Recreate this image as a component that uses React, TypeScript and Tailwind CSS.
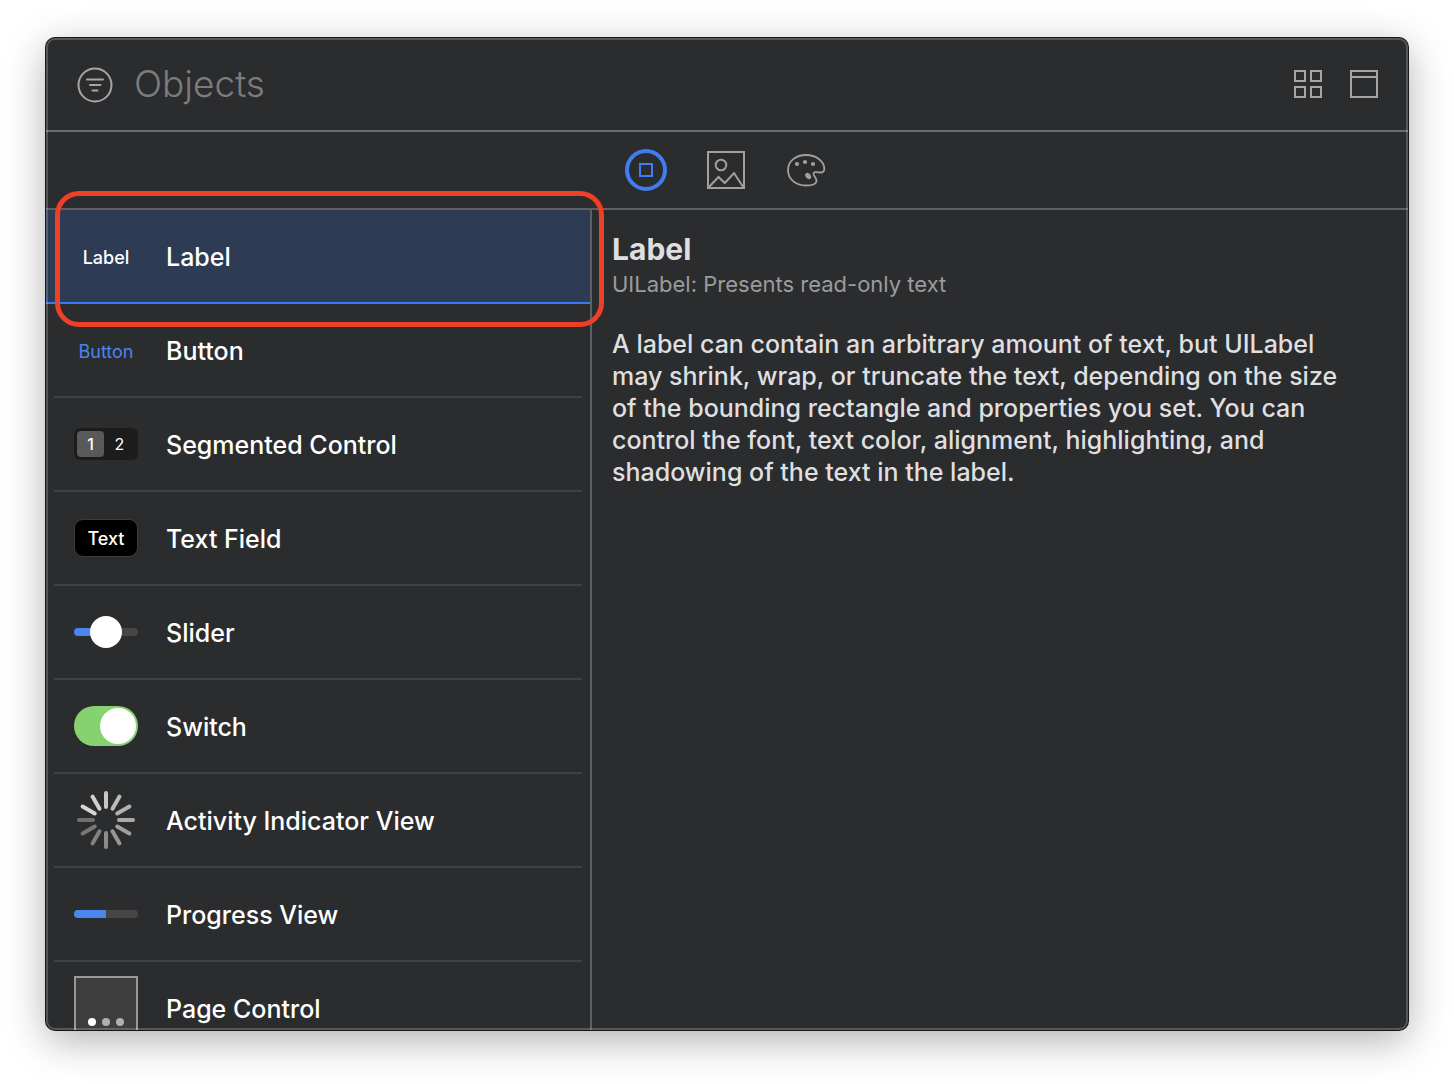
import { ReactNode, useState } from "react";

const spokes = [
  "#c8c8c8", "#bcbcbc", "#b2b2b2", "#aaaaaa", "#a0a0a0", "#969696",
  "#8c8c8c", "#828282", "#787878", "#707070", "#d6d6d6", "#d0d0d0",
];

function SegmentedPreview() {
  return (
    <span className="flex h-8 w-16 items-center rounded-md bg-[#1c1c1d] px-[3px] text-base text-white">
      <span className="flex h-[26px] w-[27px] items-center justify-center rounded bg-[#59595b] font-medium">1</span>
      <span className="flex flex-1 items-center justify-center">2</span>
    </span>
  );
}

function TextFieldPreview() {
  return (
    <span className="flex h-[38px] w-16 items-center justify-center rounded-[9px] border border-[#3c3c3d] bg-black pt-0.5 text-lg font-medium text-white">
      Text
    </span>
  );
}

function SliderPreview() {
  return (
    <span className="flex h-2 w-16 items-center justify-center rounded-full bg-linear-to-r from-[#4a86ee] from-50% to-[#464647] to-50%">
      <span className="size-8 shrink-0 rounded-full bg-white" />
    </span>
  );
}

function SwitchPreview() {
  return (
    <span className="flex h-10 w-16 items-center justify-end rounded-full bg-[#86d170] pr-0.5">
      <span className="size-9 rounded-full bg-white" />
    </span>
  );
}

function ActivityPreview() {
  return (
    <svg className="size-16" viewBox="-32 -32 64 64" strokeWidth="4" strokeLinecap="round" aria-hidden="true">
      {spokes.map((color, i) => (
        <line key={i} y1="-13" y2="-27" stroke={color} transform={`rotate(${i * 30})`} />
      ))}
    </svg>
  );
}

function ProgressPreview() {
  return (
    <span className="flex h-2 w-16 overflow-hidden rounded-full bg-[#464647]">
      <span className="w-1/2 bg-[#4a86ee]" />
    </span>
  );
}

function PagePreview() {
  return (
    <span className="flex size-16 items-end justify-center gap-1.5 border-2 border-[#98989a] bg-[#3d3d3e] pb-3">
      <span className="size-2 rounded-full bg-white" />
      <span className="size-2 rounded-full bg-[#b0b0b0]" />
      <span className="size-2 rounded-full bg-[#b0b0b0]" />
    </span>
  );
}

const objects: { name: string; preview: ReactNode }[] = [
  { name: "Label", preview: <span className="pt-1 text-lg font-medium text-white">Label</span> },
  { name: "Button", preview: <span className="pt-1 text-lg text-[#4b84ee]">Button</span> },
  { name: "Segmented Control", preview: <SegmentedPreview /> },
  { name: "Text Field", preview: <TextFieldPreview /> },
  { name: "Slider", preview: <SliderPreview /> },
  { name: "Switch", preview: <SwitchPreview /> },
  { name: "Activity Indicator View", preview: <ActivityPreview /> },
  { name: "Progress View", preview: <ProgressPreview /> },
  { name: "Page Control", preview: <PagePreview /> },
];

function Header() {
  return (
    <header className="flex h-[94px] shrink-0 items-center border-b-2 border-[#6b6c6d] pr-7 pl-[30px] text-[#a6a6a7]">
      <button type="button" aria-label="Filter" className="shrink-0">
        <svg className="size-[38px]" viewBox="0 0 38 38" fill="none" stroke="currentColor" strokeWidth="2" strokeLinecap="round">
          <circle cx="19" cy="20" r="16.5" />
          <path d="M11 14.500h16M14 20h10.500M16.500 25.500h5" />
        </svg>
      </button>
      <input
        type="text"
        aria-label="Search objects"
        placeholder="Objects"
        className="ml-5 min-w-0 flex-1 bg-transparent text-[37px] leading-[48px] font-[350] text-white outline-none placeholder:text-[#7b7c7d] placeholder:opacity-100"
      />
      <div className="flex items-center gap-6">
        <button type="button" aria-label="Icon view">
          <svg className="size-8" viewBox="0 0 32 32" fill="none" stroke="currentColor" strokeWidth="2">
            <path d="M3 3h10v10H3zM19 3h10v10H19zM3 19h10v10H3zM19 19h10v10H19z" />
          </svg>
        </button>
        <button type="button" aria-label="Details">
          <svg className="size-8" viewBox="0 0 32 32" fill="none" stroke="currentColor" strokeWidth="2">
            <path d="M3 3h26v26H3zM3 9h26" />
          </svg>
        </button>
      </div>
    </header>
  );
}

function LibraryTabs() {
  return (
    <nav className="flex h-[78px] shrink-0 items-center justify-center gap-[38px] border-b-2 border-[#5f6061] pr-0.5 text-[#a0a0a1]">
      <button type="button" aria-label="Objects library" className="text-[#417df0]">
        <svg className="size-[42px]" viewBox="0 0 42 42" fill="none" stroke="currentColor">
          <circle cx="21" cy="21" r="19" strokeWidth="4" />
          <path d="M15 15h12v12H15z" strokeWidth="2" />
        </svg>
      </button>
      <button type="button" aria-label="Media library">
        <svg className="size-[42px]" viewBox="0 0 42 42" fill="none" stroke="currentColor" strokeWidth="2">
          <path d="M3 3h36v36H3z" />
          <circle cx="16" cy="16" r="5.3" />
          <path d="M3.500 38.500 13.500 28l6.300 6L29 24l9.500 14.500" />
        </svg>
      </button>
      <button type="button" aria-label="Color library">
        <svg className="size-[42px]" viewBox="-1 -1 42 42" fill="none" stroke="currentColor" strokeWidth="1.8" strokeLinejoin="round">
          <path d="M2 20C2 11 10 5 20 5c10 0 18 6 18.300 13.500.1 3-1.800 4.200-4.300 4-2.200-.2-3.500-.6-5-.3-1.700.5-1.900 2-1 3.400 1.200 1.700 2.600 3 2.500 5.400-.1 3.500-5.500 4.500-10.500 4.500C9.500 35.500 2 29 2 20Z" />
          <g fill="currentColor" stroke="none">
            <circle cx="11" cy="14" r="2.100" />
            <circle cx="19" cy="12" r="2.100" />
            <circle cx="27" cy="14" r="2.100" />
            <ellipse cx="22.200" cy="26" rx="2.500" ry="3.500" transform="rotate(-38 22.200 26)" />
          </g>
        </svg>
      </button>
    </nav>
  );
}

export default function App() {
  const [selected, setSelected] = useState("Label");

  return (
    <div className="h-screen bg-white px-[46px] pt-[38px] pb-[54px] font-['Inter','Liberation_Sans',sans-serif] antialiased">
      <main className="relative flex h-full flex-col rounded-[9px] bg-[#2b2c2e] shadow-[0_0_0_1px_#161718,0_10px_40px_rgba(0,0,0,0.32)]">
        <Header />
        <LibraryTabs />
        <div className="flex min-h-0 flex-1">
          <aside className="relative w-[546px] shrink-0 border-r-2 border-[#5f6061]">
            <ul className="h-full overflow-y-auto rounded-bl-[9px] [scrollbar-width:none]">
              {objects.map(({ name, preview }) => {
                const active = name === selected;
                return (
                  <li key={name} className={active ? "border-b-2 border-[#347bf6] bg-[#2d3b54] px-2" : "px-2"}>
                    <button
                      type="button"
                      aria-pressed={active}
                      onClick={() => setSelected(name)}
                      className={
                        active
                          ? "flex h-[92px] w-full items-center gap-7 px-5 text-left"
                          : "flex h-[94px] w-full items-center gap-7 border-b-2 border-[#404143] px-5 text-left"
                      }
                    >
                      <span className="flex w-16 shrink-0 items-center justify-center">{preview}</span>
                      <span className="truncate pt-0.5 text-[25px] leading-8 font-medium text-white">{name}</span>
                    </button>
                  </li>
                );
              })}
            </ul>
            <div className="pointer-events-none absolute -top-[19px] -right-[14px] left-[9px] h-[136px] rounded-3xl border-[5px] border-[#ed4026]" />
          </aside>
          <article className="min-w-0 flex-1 overflow-hidden py-5 pr-12 pl-5">
            <h1 className="text-3xl leading-[38px] font-bold text-[#dfdfe0]">Label</h1>
            <p className="text-[22px] leading-8 text-[#9b9b9c]">UILabel: Presents read-only text</p>
            <p className="mt-7 text-[25px] leading-8 font-medium text-[#dfdfe0]">
              A label can contain an arbitrary amount of text, but UILabel may shrink, wrap, or truncate the text,
              depending on the size of the bounding rectangle and properties you set. You can control the font, text
              color, alignment, highlighting, and shadowing of the text in the label.
            </p>
          </article>
        </div>
        <div className="pointer-events-none absolute inset-0 rounded-[9px] border-2 border-white/20" />
      </main>
    </div>
  );
}
